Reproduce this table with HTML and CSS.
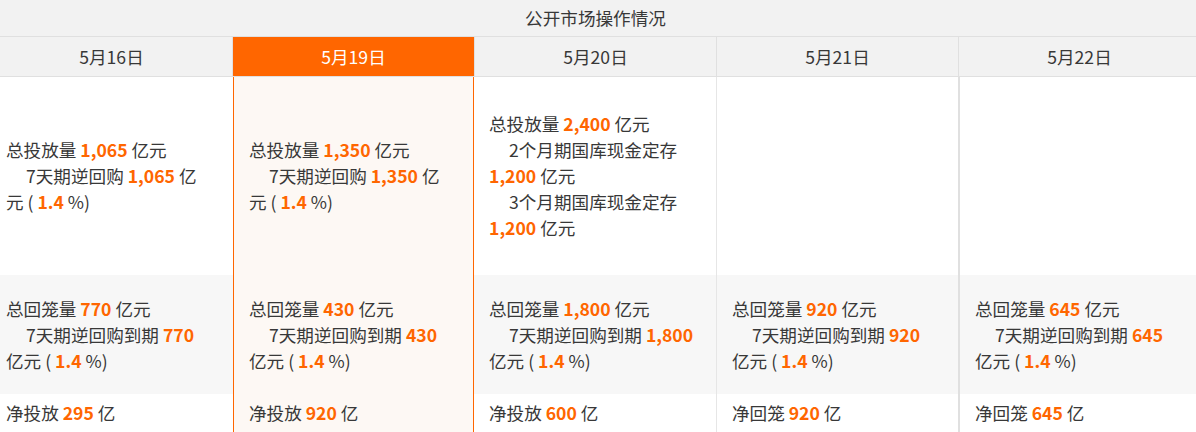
FILE: index.html
```html
<!DOCTYPE html>
<html lang="zh-CN">
<head>
<meta charset="utf-8">
<title>公开市场操作情况</title>
<link rel="stylesheet" href="styles.css">
</head>
<body>
<div class="board">
  <div class="title">公开市场操作情况</div>
  <div class="grid">
    <div class="hd c1">5月16日</div>
    <div class="hd c2 on">5月19日</div>
    <div class="hd c3">5月20日</div>
    <div class="hd c4">5月21日</div>
    <div class="hd c5">5月22日</div>

    <div class="cell r1 c1"><div>总投放量 <b>1,065</b> 亿元<br><span class="ind"></span>7天期逆回购 <b>1,065</b> 亿<br>元 ( <b>1.4</b> %)</div></div>
    <div class="cell r1 c2 on"><div>总投放量 <b>1,350</b> 亿元<br><span class="ind"></span>7天期逆回购 <b>1,350</b> 亿<br>元 ( <b>1.4</b> %)</div></div>
    <div class="cell r1 c3"><div>总投放量 <b>2,400</b> 亿元<br><span class="ind"></span>2个月期国库现金定存<br><b>1,200</b> 亿元<br><span class="ind"></span>3个月期国库现金定存<br><b>1,200</b> 亿元</div></div>
    <div class="cell r1 c4"></div>
    <div class="cell r1 c5"></div>

    <div class="cell r2 c1"><div>总回笼量 <b>770</b> 亿元<br><span class="ind"></span>7天期逆回购到期 <b>770</b><br>亿元 ( <b>1.4</b> %)</div></div>
    <div class="cell r2 c2 on"><div>总回笼量 <b>430</b> 亿元<br><span class="ind"></span>7天期逆回购到期 <b>430</b><br>亿元 ( <b>1.4</b> %)</div></div>
    <div class="cell r2 c3"><div>总回笼量 <b>1,800</b> 亿元<br><span class="ind"></span>7天期逆回购到期 <b>1,800</b><br>亿元 ( <b>1.4</b> %)</div></div>
    <div class="cell r2 c4"><div>总回笼量 <b>920</b> 亿元<br><span class="ind"></span>7天期逆回购到期 <b>920</b><br>亿元 ( <b>1.4</b> %)</div></div>
    <div class="cell r2 c5"><div>总回笼量 <b>645</b> 亿元<br><span class="ind"></span>7天期逆回购到期 <b>645</b><br>亿元 ( <b>1.4</b> %)</div></div>

    <div class="cell r3 c1"><div>净投放 <b>295</b> 亿</div></div>
    <div class="cell r3 c2 on"><div>净投放 <b>920</b> 亿</div></div>
    <div class="cell r3 c3"><div>净投放 <b>600</b> 亿</div></div>
    <div class="cell r3 c4"><div>净回笼 <b>920</b> 亿</div></div>
    <div class="cell r3 c5"><div>净回笼 <b>645</b> 亿</div></div>
  </div>
</div>
</body>
</html>
```

FILE: styles.css
```css
* { box-sizing: border-box; }
html, body { margin: 0; padding: 0; background: #fff; }
body {
  overflow: hidden;
  font-family: "Noto Sans CJK SC", "Noto Sans", sans-serif;
  font-size: 17.6px;
  color: #383838;
}
.board {
  margin-left: -9px;
  width: 1209px;
}
.title {
  height: 37px;
  line-height: 35px;
  text-align: center;
  background: #f2f2f2;
  border-bottom: 1px solid #e0e0e0;
}
.grid {
  display: grid;
  grid-template-columns: 242px 241px 242px 242px 242px;
}
.hd {
  height: 40px;
  display: flex;
  align-items: center;
  justify-content: center;
  background: #f2f2f2;
  border-bottom: 1px solid #e0e0e0;
}
.hd.c1 { border-right: 1px solid #e0e0e0; }
.hd.c3, .hd.c4, .hd.c5 { border-left: 1px solid #e0e0e0; }
.hd.on { background: #ff6600; color: #fff; }

.cell {
  display: flex;
  align-items: center;
  padding-left: 15px;
  line-height: 26px;
  white-space: nowrap;
}
.cell b { color: #ff6600; font-weight: bold; }
.ind { display: inline-block; width: 20px; }
.r1 { height: 198px; background: #fff; }
.r2 { height: 119px; background: #f7f7f7; }
.r3 { height: 38px; background: #fff; }
.cell.on {
  background: #fdf8f4;
  border-left: 1px solid #ff6600;
  border-right: 1px solid #ff6600;
  padding-left: 15px;
}
.cell.c4 { border-left: 1px solid #e6e6e6; padding-left: 15px; }
.cell.c5 { border-left: 2px solid #e0e0e0; padding-left: 15px; }
```
